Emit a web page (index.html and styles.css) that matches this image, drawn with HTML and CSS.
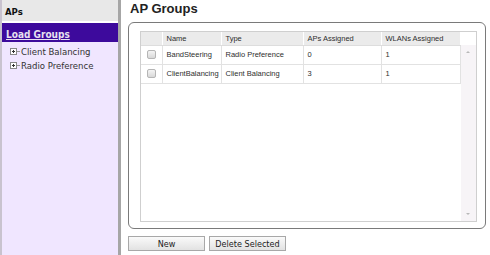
FILE: index.html
```html
<!DOCTYPE html>
<html lang="en">
<head>
  <meta charset="UTF-8"/>
  <title>AP Groups</title>
  <link rel="stylesheet" href="styles.css">
</head>
<body>
<div class="page">
  <div class="sidebar">
    <div class="side-head">APs</div>
    <div class="side-sel"><a href="#">Load Groups</a></div>
    <ul class="tree">
      <li><span class="plus"></span><span class="dash"></span>Client Balancing</li>
      <li><span class="plus"></span><span class="dash"></span>Radio Preference</li>
    </ul>
  </div>

  <div class="main">
    <h1>AP Groups</h1>
    <div class="panel">
      <div class="grid-wrap">
        <table class="grid">
          <thead>
            <tr><th class="chk"></th><th class="c-name">Name</th><th class="c-type">Type</th><th class="c-aps">APs Assigned</th><th class="c-wlan">WLANs Assigned</th></tr>
          </thead>
          <tbody>
            <tr><td class="chk"><span class="box"></span></td><td>BandSteering</td><td>Radio Preference</td><td>0</td><td>1</td></tr>
            <tr><td class="chk"><span class="box"></span></td><td>ClientBalancing</td><td>Client Balancing</td><td>3</td><td>1</td></tr>
          </tbody>
        </table>
        <div class="scroll">
          <span class="arr up"></span>
          <span class="arr down"></span>
        </div>
      </div>
    </div>
    <div class="actions">
      <button class="btn btn-new">New</button>
      <button class="btn btn-del">Delete Selected</button>
    </div>
  </div>
</div>
</body>
</html>
```

FILE: styles.css
```css
*,*::before,*::after{box-sizing:border-box;margin:0;padding:0;}
body{background:#fff;font-family:"Liberation Sans",Arial,sans-serif;overflow:hidden;}
.page{display:flex;height:255px;}

.sidebar{flex:0 0 121px;background:#f0e6ff;border-left:2px solid #c9c3cf;border-right:3px solid #a6a6a6;font-family:"DejaVu Sans Condensed","DejaVu Sans",sans-serif;}
.side-head{height:23px;background:#e8e8e8;border-bottom:2px solid #fff;padding-left:3px;line-height:23px;font-size:9.5px;font-weight:bold;color:#111;}
.side-sel{height:19px;background:#3d0a9c;padding-left:4px;line-height:19px;}
.side-sel a{color:#e6e0f0;font-size:10px;font-weight:bold;text-decoration:underline;}
.tree{list-style:none;padding:2px 0 0 8px;}
.tree li{display:flex;align-items:center;height:14px;font-size:9.5px;color:#333;}
.plus{position:relative;width:7px;height:7px;border:1px solid #888;background:#fff;}
.plus::before{content:"";position:absolute;left:1px;top:2px;width:3px;height:1px;background:#333;}
.plus::after{content:"";position:absolute;left:2px;top:1px;width:1px;height:3px;background:#333;}
.dash{width:3px;height:1px;background:#999;margin-right:1px;}

.main{flex:1;min-width:0;padding:0 4px 0 7px;}
h1{font-size:13px;font-weight:bold;color:#222;height:22px;padding-top:1px;padding-left:2px;}
.panel{height:207px;border:1px solid #7a7a7a;border-radius:6px;padding:8px 8px 6px 11px;}
.grid-wrap{display:flex;height:191px;border:1px solid #cfcfcf;}
.grid{width:320px;table-layout:fixed;border-collapse:collapse;font-size:7.5px;color:#2e2e2e;align-self:flex-start;}
.grid th{height:13px;background:#ebebeb;font-weight:normal;text-align:left;padding:0 4px;border-right:1px solid #fff;border-bottom:1px solid #ddd;white-space:nowrap;}
.grid td{height:19px;padding:0 1px 0 4px;border-right:1px solid #e2e2e2;border-bottom:1px solid #e2e2e2;white-space:nowrap;overflow:hidden;}
.grid .chk{width:21px;text-align:center;padding:0;}
.c-name{width:59px;}
.c-type{width:82px;}
.c-aps{width:78px;}
.box{display:inline-block;width:9px;height:9px;border:1px solid #b5b5b5;border-radius:2px;background:linear-gradient(#f4f4f4,#d8d8d8);vertical-align:middle;}
.scroll{flex:0 0 15px;margin-top:13px;background:#f7f4f7;position:relative;}
.arr{position:absolute;left:5px;width:0;height:0;border-left:2px solid transparent;border-right:2px solid transparent;}
.up{top:6px;border-bottom:2px solid #b8b8b8;}
.down{bottom:6px;border-top:2px solid #b8b8b8;}

.actions{display:flex;gap:4px;padding-top:7px;}
.btn{height:15px;width:77px;border:1px solid #a8a8a8;background:linear-gradient(#fafafa,#e2e2e2);font-family:"DejaVu Sans Condensed","DejaVu Sans",sans-serif;font-size:9px;color:#222;}
```
